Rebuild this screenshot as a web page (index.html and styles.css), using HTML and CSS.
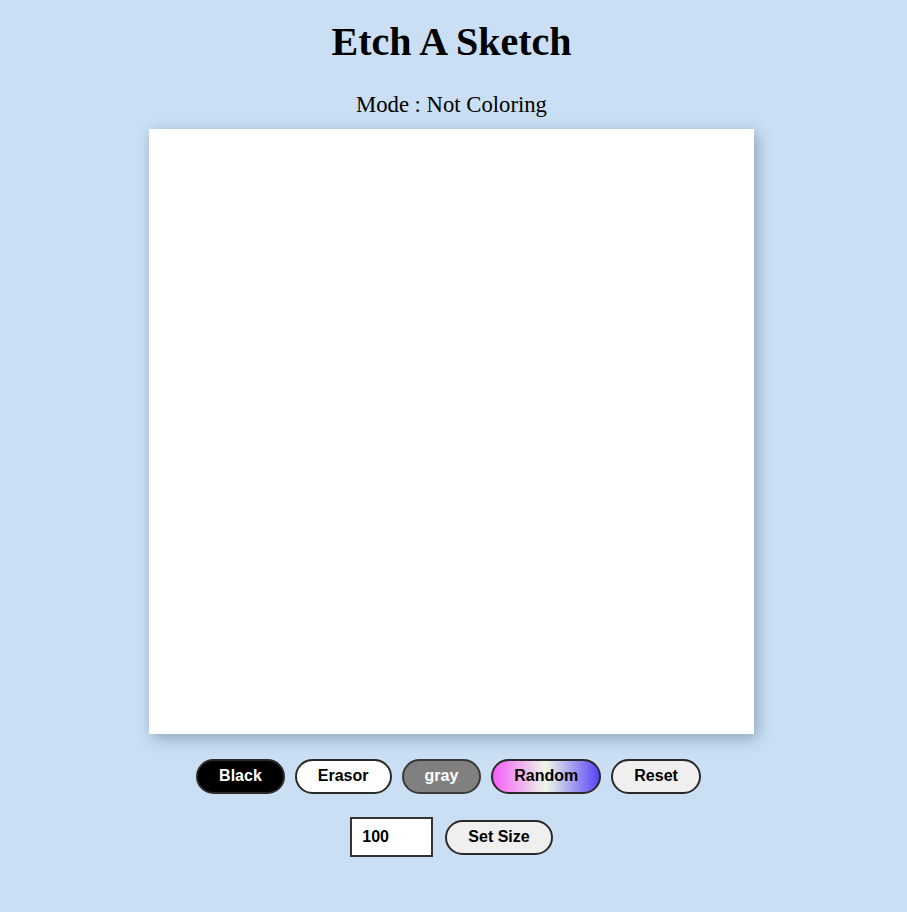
FILE: index.html
```html
<!DOCTYPE html>
<html>
<head>
<meta charset="utf-8">
<title>Etch A Sketch</title>
<link rel="stylesheet" href="styles.css">
</head>
<body>
<main class="app">
  <h1 class="title">Etch A Sketch</h1>
  <p class="mode">Mode : Not Coloring</p>
  <div class="board"></div>
  <div class="controls">
    <button class="btn btn-black">Black</button>
    <button class="btn btn-erasor">Erasor</button>
    <button class="btn btn-gray">gray</button>
    <button class="btn btn-random">Random</button>
    <button class="btn btn-reset">Reset</button>
  </div>
  <div class="size-row">
    <input class="size-input" type="text" value="100">
    <button class="btn btn-reset">Set Size</button>
  </div>
</main>
</body>
</html>
```
FILE: styles.css
```css
html, body {
  margin: 0;
  padding: 0;
}
body {
  background: #cadff3;
  font-family: "Liberation Serif", "Times New Roman", serif;
  color: #000;
  min-height: 912px;
}
.app {
  display: flex;
  flex-direction: column;
  align-items: center;
  padding-right: 4px;
}
.title {
  font-size: 40px;
  font-weight: bold;
  margin: 19px 0 0;
  line-height: 46px;
}
.mode {
  font-size: 22.7px;
  margin: 27px 0 0;
  line-height: 26px;
}
.board {
  width: 605px;
  height: 605px;
  background: #fff;
  margin-top: 11px;
  box-shadow: 3px 4px 14px rgba(60, 90, 120, 0.45);
}
.controls {
  display: flex;
  gap: 10px;
  margin-top: 25px;
  margin-right: 6px;
}
.btn {
  font-family: "Liberation Sans", Arial, sans-serif;
  font-weight: bold;
  font-size: 16px;
  line-height: 18px;
  padding: 6px 21px 7px;
  border: 2px solid #2a2a2a;
  border-radius: 20px;
  background: #efefef;
  color: #000;
}
.btn-black {
  background: #000;
  color: #fff;
}
.btn-erasor {
  background: #fff;
}
.btn-gray {
  background: #808080;
  color: #fff;
  border-color: #3a3a3a;
}
.btn-random {
  background: linear-gradient(90deg, #f45ef6 0%, #eef8e8 50%, #5a44f8 100%);
}
.size-row {
  display: flex;
  align-items: center;
  gap: 12px;
  margin-top: 23px;
}
.size-input {
  box-sizing: border-box;
  width: 83px;
  height: 40px;
  border: 2px solid #333;
  padding: 0 10px;
  font-family: "Liberation Sans", Arial, sans-serif;
  font-weight: bold;
  font-size: 16px;
  background: #fff;
}
```
